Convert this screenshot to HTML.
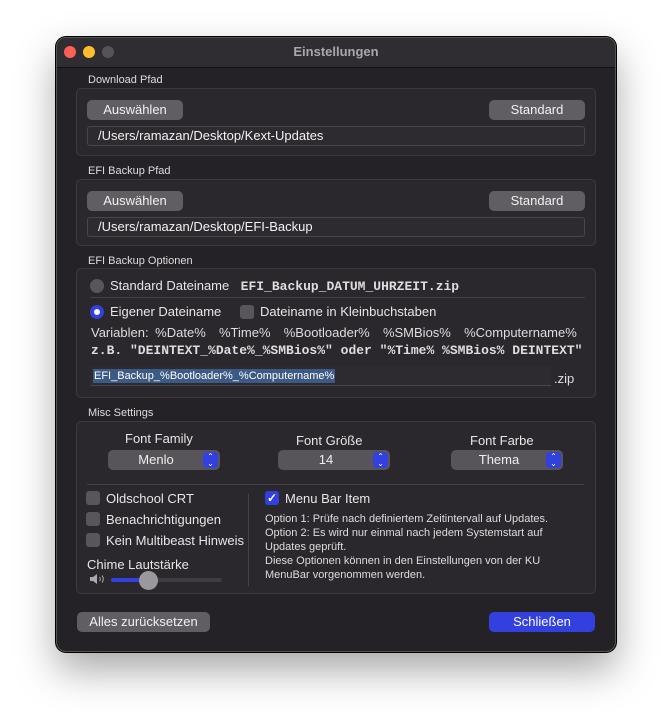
<!DOCTYPE html>
<html><head><meta charset="utf-8"><style>
*{margin:0;padding:0;box-sizing:border-box}
body{width:672px;height:726px;background:#fff;position:relative;overflow:hidden;font-family:"Liberation Sans",sans-serif;color:#e6e6e6;font-size:13px}
.win{position:absolute;left:56px;top:37px;width:560px;height:615px;background:#242227;border-radius:10px;border:1px solid #555;box-shadow:0 18px 40px rgba(0,0,0,.35),0 0 0 1px #000}
.tb{position:absolute;left:0;top:0;width:558px;height:30px;background:#2f2d32;border-bottom:1px solid #111;border-radius:10px 10px 0 0;text-align:center;line-height:28px;font-weight:bold;color:#a9a7ab;font-size:13px}
.dot{position:absolute;top:8px;width:12px;height:12px;border-radius:50%}
.a{position:absolute;white-space:nowrap}
.lbl{font-size:11px;color:#ddd}
.box{position:absolute;left:19px;width:520px;background:#2a282d;border:1px solid #3c3a3f;border-radius:5px}
.btn{position:absolute;height:20px;background:#605e63;border-radius:5px;text-align:center;line-height:20px;color:#f0f0f0;font-size:13px}
.fld{position:absolute;height:20px;background:#2d2b30;border:1px solid #48464b;border-radius:3px;line-height:18px;padding-left:10px;color:#f2f2f2;font-size:13px}
.cb{position:absolute;width:14px;height:14px;background:#58565b;border-radius:3px}
.pop{position:absolute;height:20px;width:112px;background:#57555a;border-radius:5px;text-align:center;line-height:20px;padding-right:16px;font-size:13px;color:#eee}
.pop i{position:absolute;right:2px;top:2px;width:15px;height:16px;background:#3340e0;border-radius:4px;font-style:normal;color:#fff;font-size:8px;line-height:7px;padding-top:1px;text-align:center}
.sep{position:absolute;height:1px;background:#444247}
.mono{font-family:"Liberation Mono",monospace;font-weight:bold}
.small{font-size:11px;color:#ddd;line-height:14px}
</style></head><body>
<div class="win">
<div class="tb">Einstellungen</div>
<div class="dot" style="left:7px;background:#fe5f57"></div>
<div class="dot" style="left:26px;background:#febc2e"></div>
<div class="dot" style="left:45px;background:#555358"></div>

<div class="a lbl" style="left:31px;top:36px">Download Pfad</div>
<div class="box" style="top:50px;height:68px"></div>
<div class="btn" style="left:30px;top:62px;width:96px">Auswählen</div>
<div class="btn" style="left:432px;top:62px;width:96px">Standard</div>
<div class="fld" style="left:30px;top:88px;width:498px">/Users/ramazan/Desktop/Kext-Updates</div>

<div class="a lbl" style="left:31px;top:127px">EFI Backup Pfad</div>
<div class="box" style="top:141px;height:67px"></div>
<div class="btn" style="left:30px;top:153px;width:96px">Auswählen</div>
<div class="btn" style="left:432px;top:153px;width:96px">Standard</div>
<div class="fld" style="left:30px;top:179px;width:498px">/Users/ramazan/Desktop/EFI-Backup</div>

<div class="a lbl" style="left:31px;top:217px">EFI Backup Optionen</div>
<div class="box" style="top:230px;height:130px"></div>
<div class="a" style="left:33px;top:241px;width:14px;height:14px;border-radius:50%;background:#58565b"></div>
<div class="a" style="left:53px;top:240px">Standard Dateiname <span class="mono" style="font-size:13px;color:#ddd">&nbsp;EFI_Backup_DATUM_UHRZEIT.zip</span></div>
<div class="sep" style="left:33px;top:259px;width:495px"></div>
<div class="a" style="left:33px;top:267px;width:14px;height:14px;border-radius:50%;background:#3340e0"><div style="position:absolute;left:4px;top:4px;width:6px;height:6px;border-radius:50%;background:#fff"></div></div>
<div class="a" style="left:53px;top:266px">Eigener Dateiname</div>
<div class="cb" style="left:183px;top:267px"></div>
<div class="a" style="left:203px;top:266px">Dateiname in Kleinbuchstaben</div>
<div class="a" style="left:34px;top:287px;color:#ddd;word-spacing:3px">Variablen: %Date% &nbsp;%Time% &nbsp;%Bootloader% &nbsp;%SMBios% &nbsp;%Computername%</div>
<div class="a mono" style="left:34px;top:305px;font-size:13px;color:#ddd">z.B. "DEINTEXT_%Date%_%SMBios%" oder "%Time% %SMBios% DEINTEXT"</div>
<div class="a" style="left:33px;top:328px;width:461px;height:20px;background:#2d2b30;border-bottom:1px solid #48464b"><span style="background:#3b5a86;color:#fff;font-size:11px;line-height:14px;display:inline-block;margin:3px 0 0 3px;padding:0 1px">EFI_Backup_%Bootloader%_%Computername%</span></div>
<div class="a" style="left:497px;top:333px;color:#ddd">.zip</div>

<div class="a lbl" style="left:31px;top:369px">Misc Settings</div>
<div class="box" style="top:383px;height:173px"></div>
<div class="a" style="left:68px;top:393px">Font Family</div>
<div class="a" style="left:239px;top:395px">Font Größe</div>
<div class="a" style="left:413px;top:395px">Font Farbe</div>
<div class="pop" style="left:51px;top:412px">Menlo<i>⌃<br>⌄</i></div>
<div class="pop" style="left:221px;top:412px">14<i>⌃<br>⌄</i></div>
<div class="pop" style="left:394px;top:412px">Thema<i>⌃<br>⌄</i></div>
<div class="sep" style="left:30px;top:446px;width:497px"></div>
<div class="cb" style="left:29px;top:453px"></div><div class="a" style="left:49px;top:453px">Oldschool CRT</div>
<div class="cb" style="left:29px;top:474px"></div><div class="a" style="left:49px;top:474px">Benachrichtigungen</div>
<div class="cb" style="left:29px;top:495px"></div><div class="a" style="left:49px;top:495px">Kein Multibeast Hinweis</div>
<div class="a" style="left:30px;top:519px">Chime Lautstärke</div>
<svg class="a" style="left:32px;top:535px" width="18" height="12" viewBox="0 0 18 12"><path d="M1 4h3l4-3v10l-4-3H1z" fill="#aaa"/><path d="M10.5 4a3 3 0 0 1 0 4M13 2.5a5.5 5.5 0 0 1 0 7" stroke="#aaa" stroke-width="1" fill="none"/></svg>
<div class="a" style="left:54px;top:540px;width:111px;height:4px;background:#3e3c41;border-radius:2px"></div>
<div class="a" style="left:54px;top:540px;width:38px;height:4px;background:#3340e0;border-radius:2px"></div>
<div class="a" style="left:82px;top:533px;width:19px;height:19px;border-radius:50%;background:#9a989d"></div>
<div class="sep" style="left:191px;top:456px;width:1px;height:92px"></div>
<div class="a" style="left:208px;top:453px;width:14px;height:14px;border-radius:3px;background:#3340e0;color:#fff;font-size:12px;line-height:14px;text-align:center;font-weight:bold">✓</div>
<div class="a" style="left:228px;top:453px">Menu Bar Item</div>
<div class="a small" style="left:208px;top:474px">Option 1: Prüfe nach definiertem Zeitintervall auf Updates.<br>Option 2: Es wird nur einmal nach jedem Systemstart auf<br>Updates geprüft.<br>Diese Optionen können in den Einstellungen von der KU<br>MenuBar vorgenommen werden.</div>

<div class="btn" style="left:20px;top:574px;width:133px">Alles zurücksetzen</div>
<div class="btn" style="left:432px;top:574px;width:106px;background:#3340e0;color:#fff">Schließen</div>
</div>
</body></html>
